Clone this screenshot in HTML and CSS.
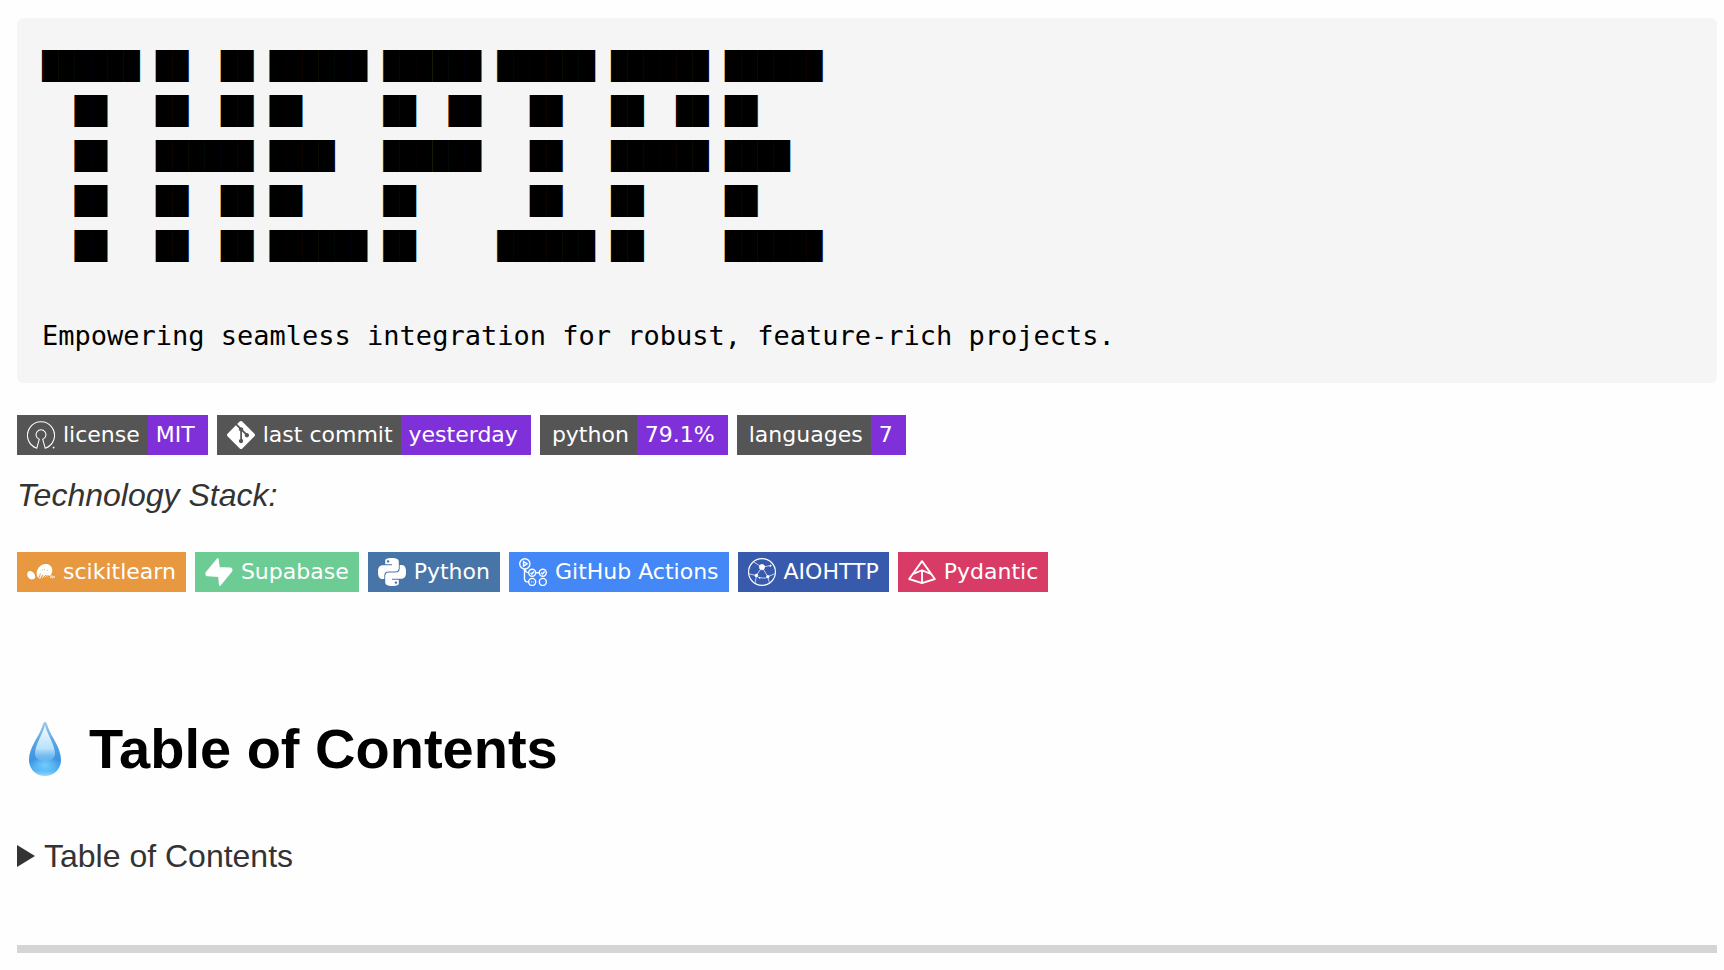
FILE: index.html
```html
<!DOCTYPE html>
<html lang="en">
<head>
<meta charset="utf-8">
<title>THEPIPE</title>
<link rel="stylesheet" href="styles.css">
</head>
<body>
<main class="readme">
<pre class="banner">██████ ██  ██ ██████ ██████ ██████ ██████ ██████
  ██   ██  ██ ██     ██  ██   ██   ██  ██ ██
  ██   ██████ ████   ██████   ██   ██████ ████
  ██   ██  ██ ██     ██       ██   ██     ██
  ██   ██  ██ ██████ ██     ██████ ██     ██████

Empowering seamless integration for robust, feature-rich projects.</pre>

<div class="badges">
  <span class="badge">
    <span class="badge-part label with-icon">
      <svg class="icon" viewBox="0 0 24 24" fill="none" stroke="#fff" stroke-width=".9" aria-hidden="true"><path d="M8.4 23.3A11.6 11.6 0 1 1 15.6 23.3L13.500 15.700A4.200 4.200 0 1 0 10.500 15.700Z"/><path d="M22.8 22.2v1.4M22.1 22.6h1.4"/></svg>
      license</span><span class="badge-part value">MIT</span>
  </span>
  <span class="badge">
    <span class="badge-part label with-icon">
      <svg class="icon" viewBox="0 0 24 24" fill="#fff" aria-hidden="true"><path d="M23.546 10.93L13.067.452c-.604-.603-1.582-.603-2.188 0L8.708 2.627l2.76 2.76c.645-.215 1.379-.07 1.889.441.516.515.658 1.258.438 1.9l2.658 2.66c.645-.223 1.387-.078 1.9.435.721.72.721 1.884 0 2.604-.719.719-1.881.719-2.6 0-.539-.541-.674-1.337-.404-1.996L12.86 8.955v6.525c.176.086.342.203.488.348.713.721.713 1.883 0 2.6-.719.721-1.889.721-2.609 0-.719-.719-.719-1.879 0-2.598.182-.18.387-.316.605-.406V8.835c-.217-.091-.424-.222-.6-.401-.545-.545-.676-1.342-.396-2.009L7.636 3.7.45 10.881c-.6.605-.6 1.584 0 2.189l10.48 10.477c.604.604 1.582.604 2.186 0l10.43-10.43c.605-.603.605-1.582 0-2.187"/></svg>
      last commit</span><span class="badge-part value">yesterday</span>
  </span>
  <span class="badge"><span class="badge-part label">python</span><span class="badge-part value">79.1%</span></span>
  <span class="badge"><span class="badge-part label">languages</span><span class="badge-part value">7</span></span>
</div>

<p class="stack-title"><em>Technology Stack:</em></p>

<div class="badges">
  <span class="badge badge-part with-icon scikit">
    <svg class="icon" viewBox="0 0 24 24" fill="#fff" aria-hidden="true"><path d="M15.6 5.2c2.9-.2 5.6 1.5 6 4.6.3 2-.4 3.700-1.500 5.200l-9 2.800c-2.500-1.200-3.600-4.500-2.200-7.600 1.200-2.900 3.800-4.800 6.700-5z"/><path d="M.3 13.200c.4-2.200 2.800-2.600 4.600-1.300 1.500 1.100 2.600 3.200 2 5.300-1.300 1.400-3.500 1.500-5 .3C.6 16.500 0 14.900.3 13.200z"/><path d="M8.800 18.500c1.200-.6 2.400-3.200 2.600-5.200M11.200 17.400c1.300.4 2.800-1.700 2.300-2.600-1.300 0-1.700 2.300-.4 2.600 1.200 0 2-2.500 3.200-2.500-1.600.6-1.600 2.600-.5 2.300.8-.3 1.200-1.600 1.400-2.300-.3 1 0 2.200.6 2.100M18.200 14.800c.9.300.5 1.500.2 2.200M20 17c.3-1.200 1-2 1.400-1.700.4.500-.2 1.800.4 1.800.6.100 1.100-.800 1.500-1.300" fill="none" stroke="#e8983f" stroke-width=".8"/><path d="M19.800 17.200c.6-1.200 1.300-2.300 1.700-2 .4.500-.4 1.900.2 2.100.5 0 .9-1.800 1.600-1.700.4.400-.1 1.200.5 1.400" fill="none" stroke="#fff" stroke-width=".8"/><path d="M12.500 10.200h1M15 9.300v1M17 10.500h1" stroke="#e8983f" stroke-width=".6"/></svg>
    scikitlearn</span>
  <span class="badge badge-part with-icon supabase">
    <svg class="icon" viewBox="0 0 24 24" fill="#fff" stroke="#fff" stroke-width="1.600" stroke-linejoin="round" aria-hidden="true"><path d="M10.900.9 1.200 12.700Q.7 14.500 2.200 14.900L12 15.400 12.800 23 22.600 11.100Q23.300 9.400 21.700 9L11.900 8.600Z"/></svg>
    Supabase</span>
  <span class="badge badge-part with-icon python">
    <svg class="icon" viewBox="0 0 24 24" fill="#fff" aria-hidden="true"><path d="M14.25.18l.9.2.73.26.59.3.45.32.34.34.25.34.16.33.1.3.04.26.02.2-.01.13V8.5l-.05.63-.13.55-.21.46-.26.38-.3.31-.33.25-.35.19-.35.14-.33.1-.3.07-.26.04-.21.02H8.77l-.69.05-.59.14-.5.22-.41.27-.33.32-.27.35-.2.36-.15.37-.1.35-.07.32-.04.27-.02.21v3.06H3.17l-.21-.03-.28-.07-.32-.12-.35-.18-.36-.26-.36-.36-.35-.46-.32-.59-.28-.73-.21-.88-.14-1.05-.05-1.23.06-1.22.16-1.04.24-.87.32-.71.36-.57.4-.44.42-.33.42-.24.4-.16.36-.1.32-.05.24-.01h.16l.06.01h8.16v-.83H6.18l-.01-2.75-.02-.37.05-.34.11-.31.17-.28.25-.26.31-.23.38-.2.44-.18.51-.15.58-.12.64-.1.71-.06.77-.04.84-.02 1.27.05zm-6.3 1.98l-.23.33-.08.41.08.41.23.34.33.22.41.09.41-.09.33-.22.23-.34.08-.41-.08-.41-.23-.33-.33-.22-.41-.09-.41.09zm13.09 3.95l.28.06.32.12.35.18.36.27.36.35.35.47.32.59.28.73.21.88.14 1.04.05 1.23-.06 1.23-.16 1.04-.24.86-.32.71-.36.57-.4.45-.42.33-.42.24-.4.16-.36.09-.32.05-.24.02-.16-.01h-8.22v.82h5.84l.01 2.76.02.36-.05.34-.11.31-.17.29-.25.25-.31.24-.38.2-.44.17-.51.15-.58.13-.64.09-.71.07-.77.04-.84.01-1.27-.04-1.07-.14-.9-.2-.73-.25-.59-.3-.45-.33-.34-.34-.25-.34-.16-.33-.1-.3-.04-.25-.02-.2.01-.13v-5.34l.05-.64.13-.54.21-.46.26-.38.3-.32.33-.24.35-.2.35-.14.33-.1.3-.06.26-.04.21-.02.13-.01h5.84l.69-.05.59-.14.5-.21.41-.28.33-.32.27-.35.2-.36.15-.36.1-.35.07-.32.04-.28.02-.21V6.07h2.09l.14.01zm-6.47 14.25l-.23.33-.08.41.08.41.23.33.33.23.41.08.41-.08.33-.23.23-.33.08-.41-.08-.41-.23-.33-.33-.23-.41-.08-.41.08z"/></svg>
    Python</span>
  <span class="badge badge-part with-icon actions">
    <svg class="icon" viewBox="0 0 24 24" fill="none" stroke="#fff" stroke-width="1.200" aria-hidden="true"><circle cx="5" cy="5" r="4.400"/><path d="M3.900 3v4L7 5Z"/><circle cx="11.300" cy="12.600" r="3"/><circle cx="20.400" cy="12.600" r="3"/><circle cx="11.300" cy="20.500" r="3"/><circle cx="20.400" cy="20.500" r="3"/><path d="M14.300 12.600h3.100M4.700 9.400v8.100q0 3 3 3h.6M5.200 9.400q.4 3.200 3.100 3.200M10 12.700l1 1 2-2.100M19 12.700l1 1 2-2.100M10.300 20.500h.6M11.900 20.500h.6"/></svg>
    GitHub Actions</span>
  <span class="badge badge-part with-icon aiohttp">
    <svg class="icon" viewBox="0 0 24 24" fill="none" stroke="#fff" stroke-width=".6" aria-hidden="true"><circle cx="12" cy="12" r="11.500" stroke-width="1"/><path d="M12 7.800 7.200 15 9.500 17 15 17.200 17 16 12 7.800 19.500 6.500M12 7.800 5 3.500M7.200 15 .8 13.600M7.200 15 6 22M17 16l6-2.500M17 16l1.500 6"/><g fill="#fff"><circle cx="12" cy="7.800" r="2.300"/><circle cx="7.200" cy="15" r="1.200"/><circle cx="17" cy="16" r="1.100"/><circle cx="19.300" cy="6.600" r=".6"/><circle cx="10" cy="17" r=".4"/></g></svg>
    AIOHTTP</span>
  <span class="badge badge-part with-icon pydantic">
    <svg class="icon" viewBox="0 0 24 24" fill="none" stroke="#fff" stroke-width="1.600" stroke-linejoin="round" aria-hidden="true"><path d="M12 2.700 1 18 12 21.500 23 18ZM12 10.500v11M4 13.800 12 10.500 20 13.800"/></svg>
    Pydantic</span>
</div>

<h2 class="heading">
  <svg class="drop" viewBox="0 0 32 54" aria-hidden="true">
    <defs>
      <linearGradient id="drop-fill" x1="0" y1="0" x2="0" y2="1"><stop offset="0" stop-color="#9fc9ec"/><stop offset=".35" stop-color="#5aa5e4"/><stop offset=".7" stop-color="#3d94e2"/><stop offset=".9" stop-color="#4fb3f4"/><stop offset="1" stop-color="#9bd8fa"/></linearGradient>
      <linearGradient id="drop-shine" x1="0" y1="0" x2="0" y2="1"><stop offset="0" stop-color="#f4fbff"/><stop offset=".65" stop-color="#b9e3fb"/><stop offset="1" stop-color="#7cc8f8" stop-opacity=".3"/></linearGradient>
      <radialGradient id="drop-glow"><stop offset="0" stop-color="#74cdfc"/><stop offset="1" stop-color="#74cdfc" stop-opacity="0"/></radialGradient>
    </defs>
    <path d="M16 0C17.500 0 18 2 19 5 22.500 16 32 25 32 38 32 47 25 54 16 54S0 47 0 38C0 25 9.500 16 13 5 14 2 14.500 0 16 0Z" fill="url(#drop-fill)"/>
    <ellipse cx="16" cy="43" rx="14" ry="10" fill="url(#drop-glow)"/>
    <path d="M16 3C17 10 26 22 26 32 26 37 21 39 16 39S6 37 6 32C6 22 15 10 16 3Z" fill="url(#drop-shine)"/>
  </svg>
  Table of Contents
</h2>

<details class="toc">
  <summary class="toc-summary"><svg class="marker" viewBox="0 0 18 22" aria-hidden="true"><path d="M0 0 18 11 0 22Z" fill="#333"/></svg>Table of Contents</summary>
</details>

<hr class="rule">
</main>
</body>
</html>
```
FILE: styles.css
```css
body {
  margin: 0;
  background: #fefefe;
  color: #333;
  font-family: "Liberation Sans", Arial, sans-serif;
  font-size: 32px;
  line-height: 48px;
}

.readme {
  padding: 18px 7px 16px 17px;
}

.banner {
  margin: 0 0 32px;
  padding: 25px;
  border-radius: 6px;
  background: #f5f5f5;
  color: #000;
  font-family: "DejaVu Sans Mono", monospace;
  font-size: 27px;
  line-height: 45px;
}

.badges {
  display: flex;
  flex-wrap: wrap;
  gap: 9px;
}

.badge {
  display: flex;
  height: 40px;
  color: #fff;
  font-family: "DejaVu Sans", Verdana, sans-serif;
  font-size: 22px;
  line-height: 42px;
  white-space: nowrap;
}

.badge-part {
  display: flex;
  align-items: center;
  box-sizing: border-box;
  height: 40px;
  padding: 0 10px 0 12px;
}

.label {
  padding-right: 8px;
  background: #555;
}

.value {
  padding: 0 13px 0 8px;
  background: #7f30d9;
}

.with-icon {
  gap: 8px;
  padding-left: 10px;
}

.icon {
  width: 28px;
  height: 28px;
  flex: none;
}

.scikit { background: #e8983f; }
.supabase { background: #6dcc93; }
.python { background: #4875a7; }
.actions { background: #4487f7; }
.aiohttp { background: #385aad; }
.pydantic { background: #d83b65; }

.stack-title {
  margin: 16px 0 33px;
}

.heading {
  display: flex;
  align-items: center;
  gap: 28px;
  margin: 117px 0 43px;
  padding-left: 12px;
  color: #000;
  font-size: 56px;
  line-height: 80px;
}

.drop {
  width: 32px;
  height: 54px;
}

.toc-summary {
  display: flex;
  align-items: center;
  gap: 9px;
  list-style: none;
}

.marker {
  width: 18px;
  height: 22px;
}

.rule {
  height: 8px;
  margin: 65px 0 0;
  border: 0;
  background: #d5d5d5;
}
```
